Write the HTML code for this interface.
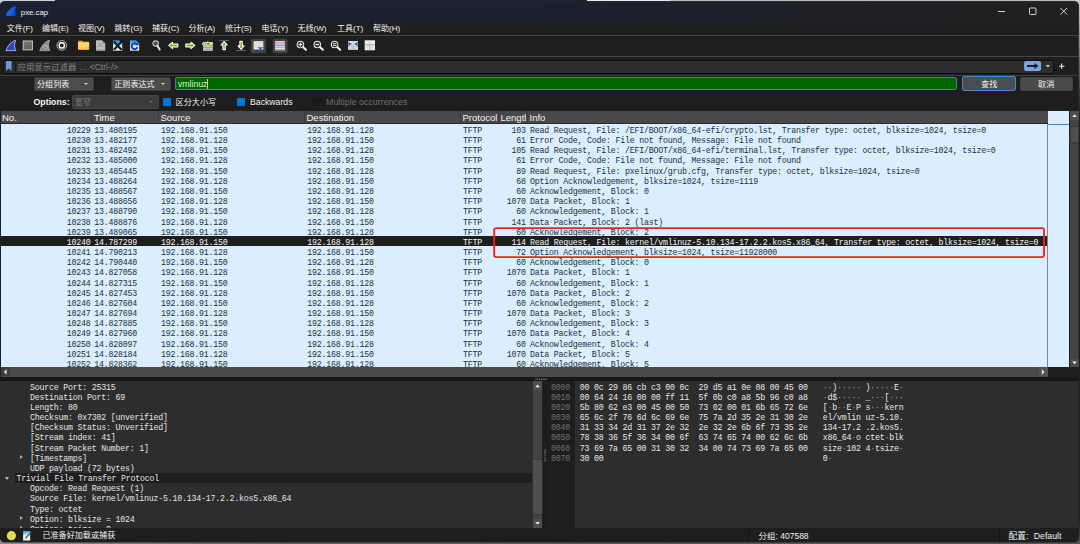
<!DOCTYPE html>
<html lang="zh-CN">
<head>
<meta charset="utf-8">
<title>pxe.cap</title>
<style>
*{box-sizing:border-box;margin:0;padding:0}
html,body{width:1080px;height:544px;overflow:hidden;background:#1e1e1e}
body{font-family:"Liberation Sans","Noto Sans CJK SC",sans-serif;color:#e6e6e6;position:relative}
#win{position:absolute;left:0;top:0;width:1080px;height:544px;overflow:hidden;background:#1e1e1e;clip-path:inset(1.2px 1.3px 1.7px 0 round 4.5px)}
#bg{position:absolute;left:0;top:0;width:1080px;height:544px;background:#666}
#bg div{position:absolute}
.abs{position:absolute}
/* title bar */
#title{position:absolute;left:0;top:0;width:1080px;height:21.5px;background:linear-gradient(90deg,#1b2033 0,#1b2033 520px,#1d202b 690px,#1f2025 830px,#202022 1000px);}
#title .name{position:absolute;left:20.8px;top:6.7px;font-size:7.8px;color:#f4f4f4;line-height:12px}
#menubar{position:absolute;left:0;top:21.5px;width:1080px;height:13.5px;background:#1f1f1f}
#menubar span{position:absolute;top:0.7px;font-size:8px;line-height:13px;color:#f2f2f2;white-space:nowrap}
.hline{position:absolute;left:0;width:1080px;height:1px;background:#444}
/* mono */
.mono{font-family:"Liberation Mono","Noto Sans CJK SC",monospace}
/* packet list */
#plist{position:absolute;left:0;top:124px;width:1047px;height:243px;background:#daeeff;overflow:hidden}
.r{position:absolute;left:0;width:1047px;height:10.18px;font-family:"Liberation Mono",monospace;font-size:8.3px;letter-spacing:-0.23px;line-height:10.18px;color:#1d3138;white-space:pre}
.r.sel{background:#1e1e1e;color:#f4f4f4}
.c{position:absolute;top:1.6px}
.no{right:956.5px}
.tm{left:94.3px}
.sr{left:161px}
.ds{left:307.3px}
.pr{left:463px}
.ln{right:521.3px}
.in{left:530px}
/* header */
#hdr{position:absolute;left:0;top:111px;width:1047.5px;height:13px;background:#494949;border-bottom:1px solid #2a2a2a}
#hdr span{position:absolute;top:0.9px;font-size:9.5px;line-height:12.5px;color:#f4f4f4;white-space:nowrap}
#hdr i{position:absolute;top:0;width:1px;height:12px;background:#3c3c3c}
/* tree */
#tree{position:absolute;left:0;top:381px;width:533.3px;height:146.8px;background:#2d2d2d;overflow:hidden}
.tl{position:absolute;font-family:"Liberation Mono",monospace;font-size:8.3px;letter-spacing:-0.23px;line-height:10.17px;color:#e4e4e4;white-space:pre}
.tsel{position:absolute;left:15px;width:519px;height:10.17px;background:#1e1e1e}
.arr-r{position:absolute;width:0;height:0;border-left:3px solid #a8a8a8;border-top:2.7px solid transparent;border-bottom:2.7px solid transparent}
.arr-d{position:absolute;width:0;height:0;border-top:3.2px solid #bdbdbd;border-left:2.9px solid transparent;border-right:2.9px solid transparent}
/* hex */
#hex{position:absolute;left:547.2px;top:381px;width:531.6px;height:146.8px;background:#2d2d2d;overflow:hidden}
.ho,.hx,.ha{position:absolute;font-family:"Liberation Mono",monospace;font-size:8.3px;letter-spacing:-0.23px;line-height:10.17px;white-space:pre}
.ha i{font-style:normal;color:#9a9a9a}
.ho{left:3.8px;color:#707070}
.hx{left:32.5px;color:#e8e8e8}
.ha{left:275.5px;color:#e8e8e8}

.dd{position:absolute;background:#4c4c4c;border:1px solid #3a3a3a;border-radius:2px}
.dd.dis{background:#3b3b3b;border-color:#454545}
.dd span{position:absolute;top:0.500px;font-size:8.100px;line-height:12px;color:#f4f4f4;white-space:nowrap}
.dd b{position:absolute;top:5.200px;width:0;height:0;border-top:2.900px solid #d0d0d0;border-left:2.700px solid transparent;border-right:2.700px solid transparent}
.btn{border-radius:2px;font-size:8.100px;color:#f2f2f2;text-align:center;line-height:12px;white-space:nowrap}
</style>
</head>
<body>
<div id="bg">
<div style="left:0;top:0;width:1080px;height:6px;background:linear-gradient(90deg,#cfcfcf 0,#cfcfcf 55px,#24262b 55px,#24262b 587px,#e6e6e6 587px,#e6e6e6 670px,#bdbdbd 670px)"></div>
<div style="left:1070px;top:0;width:10px;height:544px;background:linear-gradient(180deg,#c4c4c4 0,#b4b4b4 20px,#8a8a8a 40px,#5c5c5c 70px,#2c2c2c 105px,#1e1e1e 125px,#1e1e1e 520px,#555 544px)"></div>
<div style="left:0;top:536px;width:1074px;height:8px;background:linear-gradient(90deg,#8c8c8c 0,#5e5e5e 300px,#555 1074px)"></div>
</div>
<div id="win">
<div id="title">
<svg class="abs" style="left:5px;top:5px" width="12" height="12" viewBox="0 0 12 12"><defs><linearGradient id="gfin" x1="0" y1="0.3" x2="1" y2="0.8"><stop offset="0" stop-color="#2a86ff"/><stop offset="0.55" stop-color="#1560e6"/><stop offset="1" stop-color="#0a3bbd"/></linearGradient></defs><path d="M0.9 10.6 C1.9 7.4 4.6 3.1 10.9 0.7 C10.2 4 10.3 7.5 10.9 10.6 Z" fill="url(#gfin)"/><path d="M0.9 10.6 C3.5 9.4 8 9.5 10.9 10.6 Z" fill="#3f7ff0" opacity="0.7"/></svg>
<span class="name">pxe.cap</span>
<svg class="abs" style="left:996.800px;top:4.600px" width="76" height="12" viewBox="0 0 76 12"><path d="M1 6.5h7" stroke="#e8e8e8" stroke-width="0.9" fill="none"/><rect x="32.5" y="3" width="6.5" height="6.5" rx="1" fill="none" stroke="#e8e8e8" stroke-width="0.9"/><path d="M63.5 3l6.5 6.5M70 3l-6.5 6.5" stroke="#e8e8e8" stroke-width="0.9" fill="none"/></svg>
</div>
<div id="menubar">
<span style="left:6.8px">文件(F)</span><span style="left:42px">编辑(E)</span><span style="left:78px">视图(V)</span><span style="left:114.5px">跳转(G)</span><span style="left:152px">捕获(C)</span><span style="left:188.5px">分析(A)</span><span style="left:225px">统计(S)</span><span style="left:261.5px">电话(Y)</span><span style="left:297.5px">无线(W)</span><span style="left:337px">工具(T)</span><span style="left:373px">帮助(H)</span>
</div>
<div class="hline" style="top:35px"></div>
<svg class="abs" style="left:0;top:36px" width="400" height="20" viewBox="0 36 400 20">
<defs>
<linearGradient id="gfold" x1="0" y1="0" x2="0" y2="1"><stop offset="0" stop-color="#ffe08a"/><stop offset="1" stop-color="#fbc84a"/></linearGradient>
<linearGradient id="gstop" x1="0" y1="0" x2="1" y2="1"><stop offset="0" stop-color="#7a7a7a"/><stop offset="1" stop-color="#5a5a5a"/></linearGradient>
<linearGradient id="gpage" x1="0" y1="0" x2="0" y2="1"><stop offset="0" stop-color="#2d8fe0"/><stop offset="0.45" stop-color="#8cc8f0"/><stop offset="0.55" stop-color="#f0efe0"/><stop offset="1" stop-color="#e4e2cf"/></linearGradient>
<linearGradient id="ggray" x1="0" y1="0" x2="0" y2="1"><stop offset="0" stop-color="#d8d8d8"/><stop offset="1" stop-color="#777"/></linearGradient>
</defs>
<!-- 1 shark fin -->
<path d="M6 50.6 C8 45.5 11 41.5 15.7 40.3 C13.9 44 14.3 47.6 16 50.6 Z" fill="#2b45c6" stroke="#c3c8d6" stroke-width="0.8" stroke-linejoin="round"/>
<!-- 2 stop -->
<rect x="23.2" y="41" width="9.2" height="8.8" fill="url(#gstop)" stroke="#c6c6c6" stroke-width="1"/>
<!-- 3 gray fin -->
<path d="M39.8 50.6 C41.8 45.5 44.8 41.5 49.6 40.3 C47.8 44 48.2 47.6 49.9 50.6 Z" fill="#888" stroke="#c2c2c2" stroke-width="0.7" stroke-linejoin="round"/>
<circle cx="45.6" cy="47" r="1.7" fill="none" stroke="#c9c9c9" stroke-width="0.7"/>
<!-- 4 options -->
<circle cx="61.8" cy="45.4" r="4.8" fill="none" stroke="#c9c9c9" stroke-width="0.9"/>
<circle cx="61.8" cy="45.4" r="2.6" fill="#161616" stroke="#fafafa" stroke-width="1.5"/>
<!-- 5 folder -->
<path d="M78 41.6 q0 -0.9 0.9 -0.9 h3.4 l1.2 1.1 h4.8 q0.9 0 0.9 0.9 v1 h-11.2z" fill="#f0a500"/>
<rect x="78" y="42.4" width="11.2" height="7.3" rx="0.8" fill="url(#gfold)"/>
<rect x="78" y="49" width="11.2" height="0.8" rx="0.4" fill="#e9a100"/>
<!-- 6 save gray -->
<path d="M96 40.3 h6 l3.2 3.2 v7.2 h-9.2z" fill="#bcbcbc"/>
<path d="M102 40.3 v3.2 h3.2z" fill="#8c8c8c"/>
<path d="M97.3 46.6 h6.6 v2.8 h-6.6z M99.3 46.6 v2.8 M101.8 46.6 v2.8" fill="#d6d6d6" stroke="#8f8f8f" stroke-width="0.6"/>
<path d="M98 45.6 l1.5 -3 l1.2 2 l0.9 -1 l1.2 2z" fill="#999"/>
<!-- 7 close file -->
<path d="M113 40.3 h6 l3.2 3.2 v7.2 h-9.2z" fill="url(#gpage)"/>
<path d="M114.4 42 L121 49.2 M121 42 L114.4 49.2" stroke="#14181d" stroke-width="2" stroke-linecap="round"/>
<!-- 8 reload -->
<path d="M130 40.3 h6 l3.2 3.2 v7.2 h-9.2z" fill="url(#gpage)"/>
<path d="M137.3 44.7 A3 3 0 1 0 137.5 47.2" fill="none" stroke="#1d44b8" stroke-width="2"/>
<path d="M135 45.2 h3.6 v-3.6z" fill="#1d44b8"/>
<!-- sep -->
<rect x="146" y="40" width="0.6" height="11" fill="#272727"/>
<!-- 9 find -->
<circle cx="155.7" cy="43.6" r="2.7" fill="#4a4a4a" stroke="#c4c4c4" stroke-width="1.1"/>
<path d="M157.5 45.9 L159.7 49.5" stroke="#f8f8f8" stroke-width="1.9" stroke-linecap="round"/>
<!-- 10 left arrow -->
<path d="M168.8 45.4 L172.6 42.3 V44.1 H177.8 V46.8 H172.6 V48.6 Z" fill="#5db700" stroke="#fafafa" stroke-width="1.15" stroke-linejoin="round"/>
<!-- 11 right arrow -->
<path d="M194.8 45.4 L191 42.3 V44.1 H185.8 V46.8 H191 V48.6 Z" fill="#5db700" stroke="#fafafa" stroke-width="1.15" stroke-linejoin="round"/>
<!-- 12 goto -->
<rect x="203" y="42" width="9.8" height="8.8" fill="#d8d8d8"/>
<path d="M203 45.7h9.8M203 47.4h9.8M203 49.1h9.8" stroke="#7e7e7e" stroke-width="0.75"/>
<rect x="210.6" y="42" width="2.2" height="2.2" fill="#f3d433"/>
<path d="M202.4 43 H207.6 V41.3 L210.4 43.9 L207.6 46.4 V44.8 H202.4 Z" fill="#5db700" stroke="#eee" stroke-width="0.6" stroke-linejoin="round"/>
<!-- 13 first -->
<path d="M219.2 40.6 h9.7" stroke="#9a9a9a" stroke-width="0.6"/>
<path d="M224.1 41.6 L227.1 45 H225.3 V49.6 H222.9 V45 H221.1 Z" fill="#5db700" stroke="#fafafa" stroke-width="1.15" stroke-linejoin="round"/>
<!-- 14 last -->
<path d="M236.2 50.5 h9.7" stroke="#9a9a9a" stroke-width="0.6"/>
<path d="M241.1 49.3 L244.1 45.9 H242.3 V41.3 H239.9 V45.9 H238.1 Z" fill="#5db700" stroke="#fafafa" stroke-width="1.15" stroke-linejoin="round"/>
<!-- 15 autoscroll -->
<rect x="251" y="39" width="14.8" height="14" rx="1.2" fill="#454545" stroke="#3a3a3a" stroke-width="0.6"/>
<rect x="253.6" y="41.2" width="9.7" height="8.3" fill="#efefe6"/>
<path d="M253.6 43.2h9.7M253.6 45.2h9.7M253.6 47.2h9.7" stroke="#b5b5ad" stroke-width="0.5"/>
<path d="M257.6 47.2 h5.6 l-2.8 2.9z" fill="#2a63c4"/>
<!-- 16 colorize -->
<rect x="273" y="39" width="14.4" height="14" rx="1.2" fill="#454545" stroke="#3a3a3a" stroke-width="0.6"/>
<rect x="275" y="41.2" width="9.9" height="9.3" fill="#f1f1f1"/>
<rect x="275" y="42.3" width="9.9" height="1.2" fill="#ee7878"/>
<rect x="275" y="44.5" width="9.9" height="1.1" fill="#5a8bd4"/>
<rect x="275" y="46.6" width="9.9" height="0.9" fill="#a06fb0"/>
<rect x="275" y="48.5" width="9.9" height="2" fill="url(#ggray)"/>
<!-- sep -->
<rect x="292" y="40" width="0.6" height="11" fill="#252525"/>
<!-- 17-19 zoom -->
<g fill="none" stroke="#d8d8d8" stroke-width="1.1">
<circle cx="300.4" cy="44.5" r="3.3" fill="#3d3d3d"/><circle cx="317.3" cy="44.5" r="3.3" fill="#3d3d3d"/><circle cx="334.6" cy="44.5" r="3.3" fill="#3d3d3d"/>
</g>
<g stroke="#f8f8f8" stroke-width="1.9" stroke-linecap="round">
<path d="M303.200 47.200 L306 49.800"/><path d="M320.100 47.200 L322.900 49.800"/><path d="M337.400 47.200 L340.200 49.800"/>
</g>
<g stroke="#f0f0f0" stroke-width="1">
<path d="M298.600 44.500h3.600M300.400 42.700v3.600"/><path d="M315.600 44.500h3.400"/><path d="M333 43.700h3.200M333 45.400h3.200" stroke-width="0.800"/>
</g>
<!-- 20 resize cols -->
<rect x="348" y="41" width="10" height="8.8" fill="#e9e9e2"/>
<path d="M352 41v8.800000000000001M354 41v8.800000000000001M348 46.4h10M348 48h10" stroke="#a8a8a0" stroke-width="0.5"/>
<path d="M348.400 41.600 l3.400 2.500 l-3.400 2.500z M357.600 41.600 l-3.400 2.500 l3.400 2.500z" fill="#2a63c4"/>
<!-- 21 layout -->
<rect x="364.7" y="40.3" width="10.3" height="10" fill="#ededed"/>
<path d="M364.700 44.800h10.3M369.85 44.800v5.5" stroke="#8d8d8d" stroke-width="0.7"/>
<path d="M369.85 42v1.500M367.200 46.800v1.800M372.400 46.800v1.800" stroke="#a9a9a9" stroke-width="0.6"/>
</svg>

<div class="hline" style="top:56px"></div>
<!-- display filter bar -->
<div class="abs" style="left:3px;top:59.5px;width:1050.5px;height:14px;background:#2d2d2d;border:1px solid #0e0e0e;border-bottom-width:1.6px;border-radius:2.5px"></div>
<svg class="abs" style="left:5px;top:60px" width="12" height="13" viewBox="5 60 12 13"><path d="M6 61 h5.600 v9.800 l-2.800 -2.300 l-2.800 2.300z" fill="#6a9ad8"/><rect x="14.800" y="60.600" width="0.800" height="11.600" fill="#161616"/></svg>
<div class="abs" style="left:17.500px;top:61.200px;font-size:8.300px;letter-spacing:0.120px;line-height:12.500px;color:#858585;white-space:nowrap">应用显示过滤器 … &lt;Ctrl-/&gt;</div>
<div class="abs" style="left:1024px;top:61px;width:17px;height:10px;background:#79a6dc;border-radius:2px"></div>
<svg class="abs" style="left:1024px;top:61px" width="60" height="10" viewBox="1024 61 60 10"><path d="M1027 65 h7.500 v-1.900 l4 2.900 l-4 2.900 v-1.900 h-7.500z" fill="#1c1f24"/><path d="M1045.600 65 h4.600 l-2.300 2.400z" fill="#c6c6c6"/><path d="M1059 66.200h5.400M1061.700 63.500v5.400" stroke="#ececec" stroke-width="1.100"/></svg>
<div class="hline" style="top:75px;background:#3e3e3e"></div>
<!-- search bar -->
<div class="dd" style="left:34px;top:77px;width:60px;height:14px"><span style="left:2px">分组列表</span><b style="left:48.900px"></b></div>
<div class="dd" style="left:111.300px;top:77px;width:59.700px;height:14px"><span style="left:1.900px">正则表达式</span><b style="left:48.900px"></b></div>
<div class="abs" style="left:174.600px;top:77px;width:782.400px;height:13.400px;background:#006400;border:1px solid #3d7ec0;border-radius:2px"></div>
<div class="abs" style="left:178px;top:77.500px;font-size:8.700px;line-height:13px;color:#d9f5d9">vmlinuz</div>
<div class="abs" style="left:207.300px;top:79px;width:0.800px;height:9.500px;background:#e9b6c9"></div>
<div class="abs btn" style="left:962px;top:76.300px;width:54.400px;height:15.200px;border:1px solid #3f8ad4;background:#4a4d52;line-height:16.400px">查找</div>
<div class="abs btn" style="left:1019.600px;top:77px;width:53.200px;height:13.700px;border:1px solid #424242;background:#4b4b4b;line-height:14.400px">取消</div>
<!-- options row -->
<div class="abs" style="left:33.500px;top:95.500px;font-size:8.800px;font-weight:bold;line-height:13px;color:#f6f6f6">Options:</div>
<div class="dd dis" style="left:72.300px;top:95.300px;width:86.500px;height:13.500px"><span style="left:1.400px;color:#7c7c7c">宽窄</span><b style="left:75.900px;border-top-color:#6d6d6d"></b></div>
<div class="abs" style="left:163px;top:97.800px;width:8.300px;height:8.200px;background:#0078d7"></div>
<div class="abs" style="left:175.600px;top:95.500px;font-size:8.100px;line-height:13px;color:#f2f2f2;white-space:nowrap">区分大小写</div>
<div class="abs" style="left:237px;top:97.800px;width:8.400px;height:8.200px;background:#0078d7"></div>
<div class="abs" style="left:250px;top:95.500px;font-size:8.700px;line-height:13px;color:#f2f2f2">Backwards</div>
<div class="abs" style="left:313px;top:97.800px;width:8.300px;height:8.200px;background:#191919"></div>
<div class="abs" style="left:326px;top:95.500px;font-size:8.900px;line-height:13px;color:#6f6f6f;white-space:nowrap">Multiple occurrences</div>

<div id="hdr">
<span style="left:2px">No.</span><span style="left:94px">Time</span><span style="left:160.5px">Source</span><span style="left:306.5px">Destination</span><span style="left:462.5px">Protocol</span><span style="left:500.5px;width:25.5px;overflow:hidden">Length</span><span style="left:529.5px">Info</span>
<i style="left:91px"></i><i style="left:157.5px"></i><i style="left:303.5px"></i><i style="left:459.5px"></i><i style="left:497.5px"></i><i style="left:527px"></i>
</div>
<div id="plist">
<div style="position:absolute;left:0;top:-124px;width:1047px;height:400px">
<div class="r" style="top:124.30px"><span class="c no">10229</span><span class="c tm">13.480195</span><span class="c sr">192.168.91.150</span><span class="c ds">192.168.91.128</span><span class="c pr">TFTP</span><span class="c ln">103</span><span class="c in">Read Request, File: /EFI/BOOT/x86_64-efi/crypto.lst, Transfer type: octet, blksize=1024, tsize=0</span></div>
<div class="r" style="top:134.48px"><span class="c no">10230</span><span class="c tm">13.482177</span><span class="c sr">192.168.91.128</span><span class="c ds">192.168.91.150</span><span class="c pr">TFTP</span><span class="c ln">61</span><span class="c in">Error Code, Code: File not found, Message: File not found</span></div>
<div class="r" style="top:144.66px"><span class="c no">10231</span><span class="c tm">13.482492</span><span class="c sr">192.168.91.150</span><span class="c ds">192.168.91.128</span><span class="c pr">TFTP</span><span class="c ln">105</span><span class="c in">Read Request, File: /EFI/BOOT/x86_64-efi/terminal.lst, Transfer type: octet, blksize=1024, tsize=0</span></div>
<div class="r" style="top:154.84px"><span class="c no">10232</span><span class="c tm">13.485000</span><span class="c sr">192.168.91.128</span><span class="c ds">192.168.91.150</span><span class="c pr">TFTP</span><span class="c ln">61</span><span class="c in">Error Code, Code: File not found, Message: File not found</span></div>
<div class="r" style="top:165.02px"><span class="c no">10233</span><span class="c tm">13.485445</span><span class="c sr">192.168.91.150</span><span class="c ds">192.168.91.128</span><span class="c pr">TFTP</span><span class="c ln">89</span><span class="c in">Read Request, File: pxelinux/grub.cfg, Transfer type: octet, blksize=1024, tsize=0</span></div>
<div class="r" style="top:175.20px"><span class="c no">10234</span><span class="c tm">13.488264</span><span class="c sr">192.168.91.128</span><span class="c ds">192.168.91.150</span><span class="c pr">TFTP</span><span class="c ln">68</span><span class="c in">Option Acknowledgement, blksize=1024, tsize=1119</span></div>
<div class="r" style="top:185.38px"><span class="c no">10235</span><span class="c tm">13.488567</span><span class="c sr">192.168.91.150</span><span class="c ds">192.168.91.128</span><span class="c pr">TFTP</span><span class="c ln">60</span><span class="c in">Acknowledgement, Block: 0</span></div>
<div class="r" style="top:195.56px"><span class="c no">10236</span><span class="c tm">13.488656</span><span class="c sr">192.168.91.128</span><span class="c ds">192.168.91.150</span><span class="c pr">TFTP</span><span class="c ln">1070</span><span class="c in">Data Packet, Block: 1</span></div>
<div class="r" style="top:205.74px"><span class="c no">10237</span><span class="c tm">13.488790</span><span class="c sr">192.168.91.150</span><span class="c ds">192.168.91.128</span><span class="c pr">TFTP</span><span class="c ln">60</span><span class="c in">Acknowledgement, Block: 1</span></div>
<div class="r" style="top:215.92px"><span class="c no">10238</span><span class="c tm">13.488876</span><span class="c sr">192.168.91.128</span><span class="c ds">192.168.91.150</span><span class="c pr">TFTP</span><span class="c ln">141</span><span class="c in">Data Packet, Block: 2 (last)</span></div>
<div class="r" style="top:226.10px"><span class="c no">10239</span><span class="c tm">13.489065</span><span class="c sr">192.168.91.150</span><span class="c ds">192.168.91.128</span><span class="c pr">TFTP</span><span class="c ln">60</span><span class="c in">Acknowledgement, Block: 2</span></div>
<div class="r sel" style="top:236.28px"><span class="c no">10240</span><span class="c tm">14.787299</span><span class="c sr">192.168.91.150</span><span class="c ds">192.168.91.128</span><span class="c pr">TFTP</span><span class="c ln">114</span><span class="c in">Read Request, File: kernel/vmlinuz-5.10.134-17.2.2.kos5.x86_64, Transfer type: octet, blksize=1024, tsize=0</span></div>
<div class="r" style="top:246.46px"><span class="c no">10241</span><span class="c tm">14.790213</span><span class="c sr">192.168.91.128</span><span class="c ds">192.168.91.150</span><span class="c pr">TFTP</span><span class="c ln">72</span><span class="c in">Option Acknowledgement, blksize=1024, tsize=11928000</span></div>
<div class="r" style="top:256.64px"><span class="c no">10242</span><span class="c tm">14.790440</span><span class="c sr">192.168.91.150</span><span class="c ds">192.168.91.128</span><span class="c pr">TFTP</span><span class="c ln">60</span><span class="c in">Acknowledgement, Block: 0</span></div>
<div class="r" style="top:266.82px"><span class="c no">10243</span><span class="c tm">14.827058</span><span class="c sr">192.168.91.128</span><span class="c ds">192.168.91.150</span><span class="c pr">TFTP</span><span class="c ln">1070</span><span class="c in">Data Packet, Block: 1</span></div>
<div class="r" style="top:277.00px"><span class="c no">10244</span><span class="c tm">14.827315</span><span class="c sr">192.168.91.150</span><span class="c ds">192.168.91.128</span><span class="c pr">TFTP</span><span class="c ln">60</span><span class="c in">Acknowledgement, Block: 1</span></div>
<div class="r" style="top:287.18px"><span class="c no">10245</span><span class="c tm">14.827453</span><span class="c sr">192.168.91.128</span><span class="c ds">192.168.91.150</span><span class="c pr">TFTP</span><span class="c ln">1070</span><span class="c in">Data Packet, Block: 2</span></div>
<div class="r" style="top:297.36px"><span class="c no">10246</span><span class="c tm">14.827604</span><span class="c sr">192.168.91.150</span><span class="c ds">192.168.91.128</span><span class="c pr">TFTP</span><span class="c ln">60</span><span class="c in">Acknowledgement, Block: 2</span></div>
<div class="r" style="top:307.54px"><span class="c no">10247</span><span class="c tm">14.827694</span><span class="c sr">192.168.91.128</span><span class="c ds">192.168.91.150</span><span class="c pr">TFTP</span><span class="c ln">1070</span><span class="c in">Data Packet, Block: 3</span></div>
<div class="r" style="top:317.72px"><span class="c no">10248</span><span class="c tm">14.827885</span><span class="c sr">192.168.91.150</span><span class="c ds">192.168.91.128</span><span class="c pr">TFTP</span><span class="c ln">60</span><span class="c in">Acknowledgement, Block: 3</span></div>
<div class="r" style="top:327.90px"><span class="c no">10249</span><span class="c tm">14.827960</span><span class="c sr">192.168.91.128</span><span class="c ds">192.168.91.150</span><span class="c pr">TFTP</span><span class="c ln">1070</span><span class="c in">Data Packet, Block: 4</span></div>
<div class="r" style="top:338.08px"><span class="c no">10250</span><span class="c tm">14.828097</span><span class="c sr">192.168.91.150</span><span class="c ds">192.168.91.128</span><span class="c pr">TFTP</span><span class="c ln">60</span><span class="c in">Acknowledgement, Block: 4</span></div>
<div class="r" style="top:348.26px"><span class="c no">10251</span><span class="c tm">14.828184</span><span class="c sr">192.168.91.128</span><span class="c ds">192.168.91.150</span><span class="c pr">TFTP</span><span class="c ln">1070</span><span class="c in">Data Packet, Block: 5</span></div>
<div class="r" style="top:358.44px"><span class="c no">10252</span><span class="c tm">14.828362</span><span class="c sr">192.168.91.150</span><span class="c ds">192.168.91.128</span><span class="c pr">TFTP</span><span class="c ln">60</span><span class="c in">Acknowledgement, Block: 5</span></div>
</div>
</div>
<!-- minimap + scrollbars -->
<div class="abs" style="left:1047.300px;top:124px;width:1px;height:243px;background:#858585"></div>
<div class="abs" style="left:1048.200px;top:111px;width:20.400px;height:256px;background:#daeeff"></div>
<div class="abs" style="left:1048.200px;top:123.700px;width:20.400px;height:1px;background:#2f86dc"></div>
<div class="abs" style="left:1068.600px;top:111px;width:1.200px;height:256px;background:#1e1e1e"></div>
<div class="abs" style="left:1069.800px;top:111px;width:9px;height:256px;background:#444"></div>
<div class="abs" style="left:1069.800px;top:111px;width:9px;height:8.700px;background:#4e4e4e"></div>
<div class="abs" style="left:1069.800px;top:126px;width:9px;height:17px;background:#4f4f4f;border:0.500px solid #3a3a3a;box-shadow:0 0 0 0.500px #3a3a3a"></div>
<div class="abs" style="left:1069.800px;top:358.600px;width:9px;height:8.400px;background:#4e4e4e"></div>
<svg class="abs" style="left:1069.800px;top:111px" width="9" height="256" viewBox="0 0 9 256"><path d="M2.100 6 L4.500 3.300 L6.900 6z" fill="#e8e8e8"/><path d="M2.100 250.500 L4.500 253.200 L6.900 250.500z" fill="#e8e8e8"/></svg>
<!-- hscroll -->
<div class="abs" style="left:0;top:367px;width:1047.500px;height:9.800px;background:#4a4a4a"></div>
<div class="abs" style="left:0.800px;top:367.400px;width:9.400px;height:9px;background:#3d3d3d"></div>
<div class="abs" style="left:1039px;top:367.400px;width:8.500px;height:9px;background:#555"></div>
<svg class="abs" style="left:0;top:367px" width="1048" height="10" viewBox="0 0 1048 10"><path d="M6.600 2.300 L3.800 4.900 L6.600 7.500z" fill="#e8e8e8"/><path d="M1041.800 2.300 L1044.600 4.900 L1041.800 7.500z" fill="#e8e8e8"/></svg>
<div class="abs" style="left:0;top:376.800px;width:1080px;height:4.200px;background:#171717"></div>
<svg class="abs" style="left:534px;top:377px" width="14" height="4" viewBox="0 0 14 4"><path d="M1.500 2.200h11.500" stroke="#8a8a8a" stroke-width="1.400" stroke-dasharray="0.900 0.900"/></svg>
<!-- red annotation -->
<svg class="abs" style="left:490px;top:224px" width="560" height="38" viewBox="490 224 560 38"><rect x="494.200" y="228.100" width="549.800" height="29" rx="2" fill="none" stroke="#f3221c" stroke-width="1.900"/></svg>
<div class="abs" id="leftstrip" style="left:0;top:111px;width:1px;height:266px;background:#1e1e1e"></div>

<div id="tree"><div style="position:absolute;left:0;top:-381px;width:534px;height:600px">
<div class="tl" style="top:382.50px;left:30px">Source Port: 25315</div>
<div class="tl" style="top:392.67px;left:30px">Destination Port: 69</div>
<div class="tl" style="top:402.84px;left:30px">Length: 80</div>
<div class="tl" style="top:413.01px;left:30px">Checksum: 0x7302 [unverified]</div>
<div class="tl" style="top:423.18px;left:30px">[Checksum Status: Unverified]</div>
<div class="tl" style="top:433.35px;left:30px">[Stream index: 41]</div>
<div class="tl" style="top:443.52px;left:30px">[Stream Packet Number: 1]</div>
<div class="arr-r" style="top:455.19px;left:20.3px"></div>
<div class="tl" style="top:453.69px;left:30px">[Timestamps]</div>
<div class="tl" style="top:463.86px;left:30px">UDP payload (72 bytes)</div>
<div class="tsel" style="top:472.93px"></div>
<div class="arr-d" style="top:476.93px;left:5px"></div>
<div class="tl" style="top:474.03px;left:16.5px">Trivial File Transfer Protocol</div>
<div class="tl" style="top:484.20px;left:30px">Opcode: Read Request (1)</div>
<div class="tl" style="top:494.37px;left:30px">Source File: kernel/vmlinuz-5.10.134-17.2.2.kos5.x86_64</div>
<div class="tl" style="top:504.54px;left:30px">Type: octet</div>
<div class="arr-r" style="top:516.21px;left:20.3px"></div>
<div class="tl" style="top:514.71px;left:30px">Option: blksize = 1024</div>
<div class="arr-r" style="top:526.38px;left:20.3px"></div>
<div class="tl" style="top:524.88px;left:30px">Option: tsize = 0</div>
</div></div>
<div id="hex"><div style="position:absolute;left:0;top:-381px;width:540px;height:600px">
<div style="position:absolute;left:0;top:381px;width:27.8px;height:147px;background:#1e1e1e"></div>
<div class="ho" style="top:382.50px">0000</div><div class="hx" style="top:382.50px">00 0c 29 86 cb c3 00 0c  29 d5 a1 0e 08 00 45 00</div><div class="ha" style="top:382.50px"><i>·</i><i>·</i>)<i>·</i><i>·</i><i>·</i><i>·</i><i>·</i> )<i>·</i><i>·</i><i>·</i><i>·</i><i>·</i>E<i>·</i></div>
<div class="ho" style="top:392.67px">0010</div><div class="hx" style="top:392.67px">00 64 24 16 00 00 ff 11  5f 0b c0 a8 5b 96 c0 a8</div><div class="ha" style="top:392.67px"><i>·</i>d$<i>·</i><i>·</i><i>·</i><i>·</i><i>·</i> _<i>·</i><i>·</i><i>·</i>[<i>·</i><i>·</i><i>·</i></div>
<div class="ho" style="top:402.84px">0020</div><div class="hx" style="top:402.84px">5b 80 62 e3 00 45 00 50  73 02 00 01 6b 65 72 6e</div><div class="ha" style="top:402.84px">[<i>·</i>b<i>·</i><i>·</i>E<i>·</i>P s<i>·</i><i>·</i><i>·</i>kern</div>
<div class="ho" style="top:413.01px">0030</div><div class="hx" style="top:413.01px">65 6c 2f 76 6d 6c 69 6e  75 7a 2d 35 2e 31 30 2e</div><div class="ha" style="top:413.01px">el/vmlin uz-5.10.</div>
<div class="ho" style="top:423.18px">0040</div><div class="hx" style="top:423.18px">31 33 34 2d 31 37 2e 32  2e 32 2e 6b 6f 73 35 2e</div><div class="ha" style="top:423.18px">134-17.2 .2.kos5.</div>
<div class="ho" style="top:433.35px">0050</div><div class="hx" style="top:433.35px">78 38 36 5f 36 34 00 6f  63 74 65 74 00 62 6c 6b</div><div class="ha" style="top:433.35px">x86_64<i>·</i>o ctet<i>·</i>blk</div>
<div class="ho" style="top:443.52px">0060</div><div class="hx" style="top:443.52px">73 69 7a 65 00 31 30 32  34 00 74 73 69 7a 65 00</div><div class="ha" style="top:443.52px">size<i>·</i>102 4<i>·</i>tsize<i>·</i></div>
<div class="ho" style="top:453.69px">0070</div><div class="hx" style="top:453.69px">30 00</div><div class="ha" style="top:453.69px">0<i>·</i></div>
</div></div>
<!-- tree scrollbar -->
<div class="abs" style="left:533.300px;top:381px;width:9.200px;height:146.800px;background:#434343"></div>
<div class="abs" style="left:533.300px;top:381px;width:9.200px;height:9px;background:#4e4e4e"></div>
<div class="abs" style="left:533.300px;top:460.400px;width:9.200px;height:53.300px;background:#4f4f4f;box-shadow:0 0 0 0.600px #363636"></div>
<div class="abs" style="left:533.300px;top:519px;width:9.200px;height:8.800px;background:#4e4e4e"></div>
<svg class="abs" style="left:533.300px;top:381px" width="9.200" height="147" viewBox="0 0 9.200 147"><path d="M2.200 6.100 L4.600 3.400 L7 6.100z" fill="#e8e8e8"/><path d="M2.200 141 L4.600 143.700 L7 141z" fill="#e8e8e8"/></svg>
<div class="abs" style="left:542.500px;top:381px;width:4.700px;height:146.800px;background:#1c1c1c"></div>
<svg class="abs" style="left:543px;top:449px" width="4" height="13" viewBox="0 0 4 13"><path d="M2 0.500v12" stroke="#8a8a8a" stroke-width="1.300" stroke-dasharray="0.900 0.900"/></svg>
<!-- status bar -->
<div class="abs" style="left:0;top:527.800px;width:1080px;height:16.200px;background:#1e1e1e"></div>
<div class="abs" style="left:748.300px;top:529px;width:0.800px;height:13px;background:#111"></div><div class="abs" style="left:998.800px;top:529px;width:0.800px;height:13px;background:#111"></div>
<svg class="abs" style="left:0;top:528px" width="40" height="16" viewBox="0 528 40 16"><defs><linearGradient id="gsky" x1="0" y1="0" x2="0" y2="1"><stop offset="0" stop-color="#2f96e4"/><stop offset="0.4" stop-color="#bfe0f6"/><stop offset="0.55" stop-color="#f4f4f0"/><stop offset="1" stop-color="#ecece6"/></linearGradient></defs><circle cx="11.400" cy="535.700" r="4.600" fill="#e1dd57"/><rect x="23.100" y="531" width="7.100" height="9.600" fill="url(#gsky)"/><path d="M25.300 537.500 L31.200 531.400 L32 532.200 L26.200 538.300 L25 538.700z" fill="#4a4a4a"/></svg>
<div class="abs" style="left:42.400px;top:529.500px;font-size:8.100px;line-height:12.500px;color:#f0f0f0;white-space:nowrap">已准备好加载或捕获</div>
<div class="abs" style="left:758.500px;top:529.500px;font-size:8.500px;line-height:12.500px;color:#f0f0f0;white-space:nowrap">分组: 407588</div>
<div class="abs" style="left:1008.500px;top:529.500px;font-size:8.700px;line-height:12.500px;color:#f0f0f0;white-space:nowrap">配置:<span style="position:absolute;left:25.300px;top:0">Default</span></div>

</div>
</body>
</html>
